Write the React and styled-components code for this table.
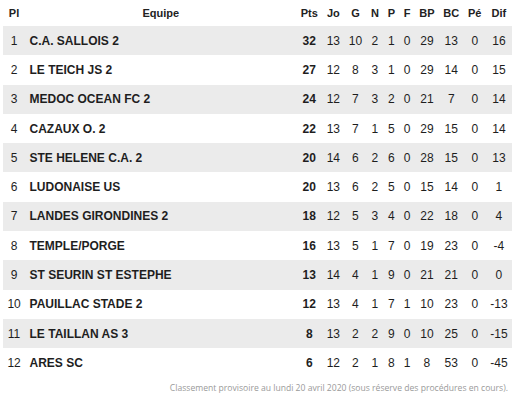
import React from "react";
import styled, { createGlobalStyle } from "styled-components";

const Global = createGlobalStyle`
  html, body { margin: 0; padding: 0; background: #fff; }
  body { font-family: "Liberation Sans", Arial, sans-serif; color: #222; }
`;

const Page = styled.div`
  padding: 0 3px;
  width: 515px;
  box-sizing: border-box;
`;

const Table = styled.table`
  width: 100%;
  border-collapse: collapse;
  border-spacing: 0;
`;

const HeadRow = styled.tr`
  height: 26px;
`;

const Th = styled.th`
  font-size: 11px;
  font-weight: bold;
  color: #222;
  padding: 0 4.4px;
  text-align: center;
  white-space: nowrap;
  width: ${(p) => (p.$wide ? "100%" : "auto")};
`;

const Row = styled.tr`
  height: 29.3px;
  background: ${(p) => (p.$odd ? "#ebebeb" : "#fff")};
`;

const Td = styled.td`
  font-size: 12px;
  padding: 0 4.4px;
  text-align: ${(p) => (p.$left ? "left" : "center")};
  font-weight: ${(p) => (p.$bold ? "bold" : "normal")};
  color: #1e1e1e;
  white-space: nowrap;
`;

const Note = styled.div`
  font-family: "Open Sans", sans-serif;
  font-size: 8.6px;
  color: #9a9a9a;
  text-align: right;
  padding: 4px 4px 0 0;
`;

const rows = [
  [1, "C.A. SALLOIS 2", 32, 13, 10, 2, 1, 0, 29, 13, 0, 16],
  [2, "LE TEICH JS 2", 27, 12, 8, 3, 1, 0, 29, 14, 0, 15],
  [3, "MEDOC OCEAN FC 2", 24, 12, 7, 3, 2, 0, 21, 7, 0, 14],
  [4, "CAZAUX O. 2", 22, 13, 7, 1, 5, 0, 29, 15, 0, 14],
  [5, "STE HELENE C.A. 2", 20, 14, 6, 2, 6, 0, 28, 15, 0, 13],
  [6, "LUDONAISE US", 20, 13, 6, 2, 5, 0, 15, 14, 0, 1],
  [7, "LANDES GIRONDINES 2", 18, 12, 5, 3, 4, 0, 22, 18, 0, 4],
  [8, "TEMPLE/PORGE", 16, 13, 5, 1, 7, 0, 19, 23, 0, -4],
  [9, "ST SEURIN ST ESTEPHE", 13, 14, 4, 1, 9, 0, 21, 21, 0, 0],
  [10, "PAUILLAC STADE 2", 12, 13, 4, 1, 7, 1, 10, 23, 0, -13],
  [11, "LE TAILLAN AS 3", 8, 13, 2, 2, 9, 0, 10, 25, 0, -15],
  [12, "ARES SC", 6, 12, 2, 1, 8, 1, 8, 53, 0, -45],
];

const heads = ["Pts", "Jo", "G", "N", "P", "F", "BP", "BC", "Pé", "Dif"];

export default function App() {
  return (
    <Page>
      <Global />
      <Table>
        <thead>
          <HeadRow>
            <Th>Pl</Th>
            <Th $wide>Equipe</Th>
            {heads.map((h) => (
              <Th key={h}>{h}</Th>
            ))}
          </HeadRow>
        </thead>
        <tbody>
          {rows.map((r, i) => (
            <Row key={r[0]} $odd={i % 2 === 0}>
              <Td>{r[0]}</Td>
              <Td $left $bold>
                {r[1]}
              </Td>
              <Td $bold>{r[2]}</Td>
              {r.slice(3).map((v, j) => (
                <Td key={j}>{v}</Td>
              ))}
            </Row>
          ))}
        </tbody>
      </Table>
      <Note>
        Classement provisoire au lundi 20 avril 2020 (sous réserve des procédures en cours).
      </Note>
    </Page>
  );
}
